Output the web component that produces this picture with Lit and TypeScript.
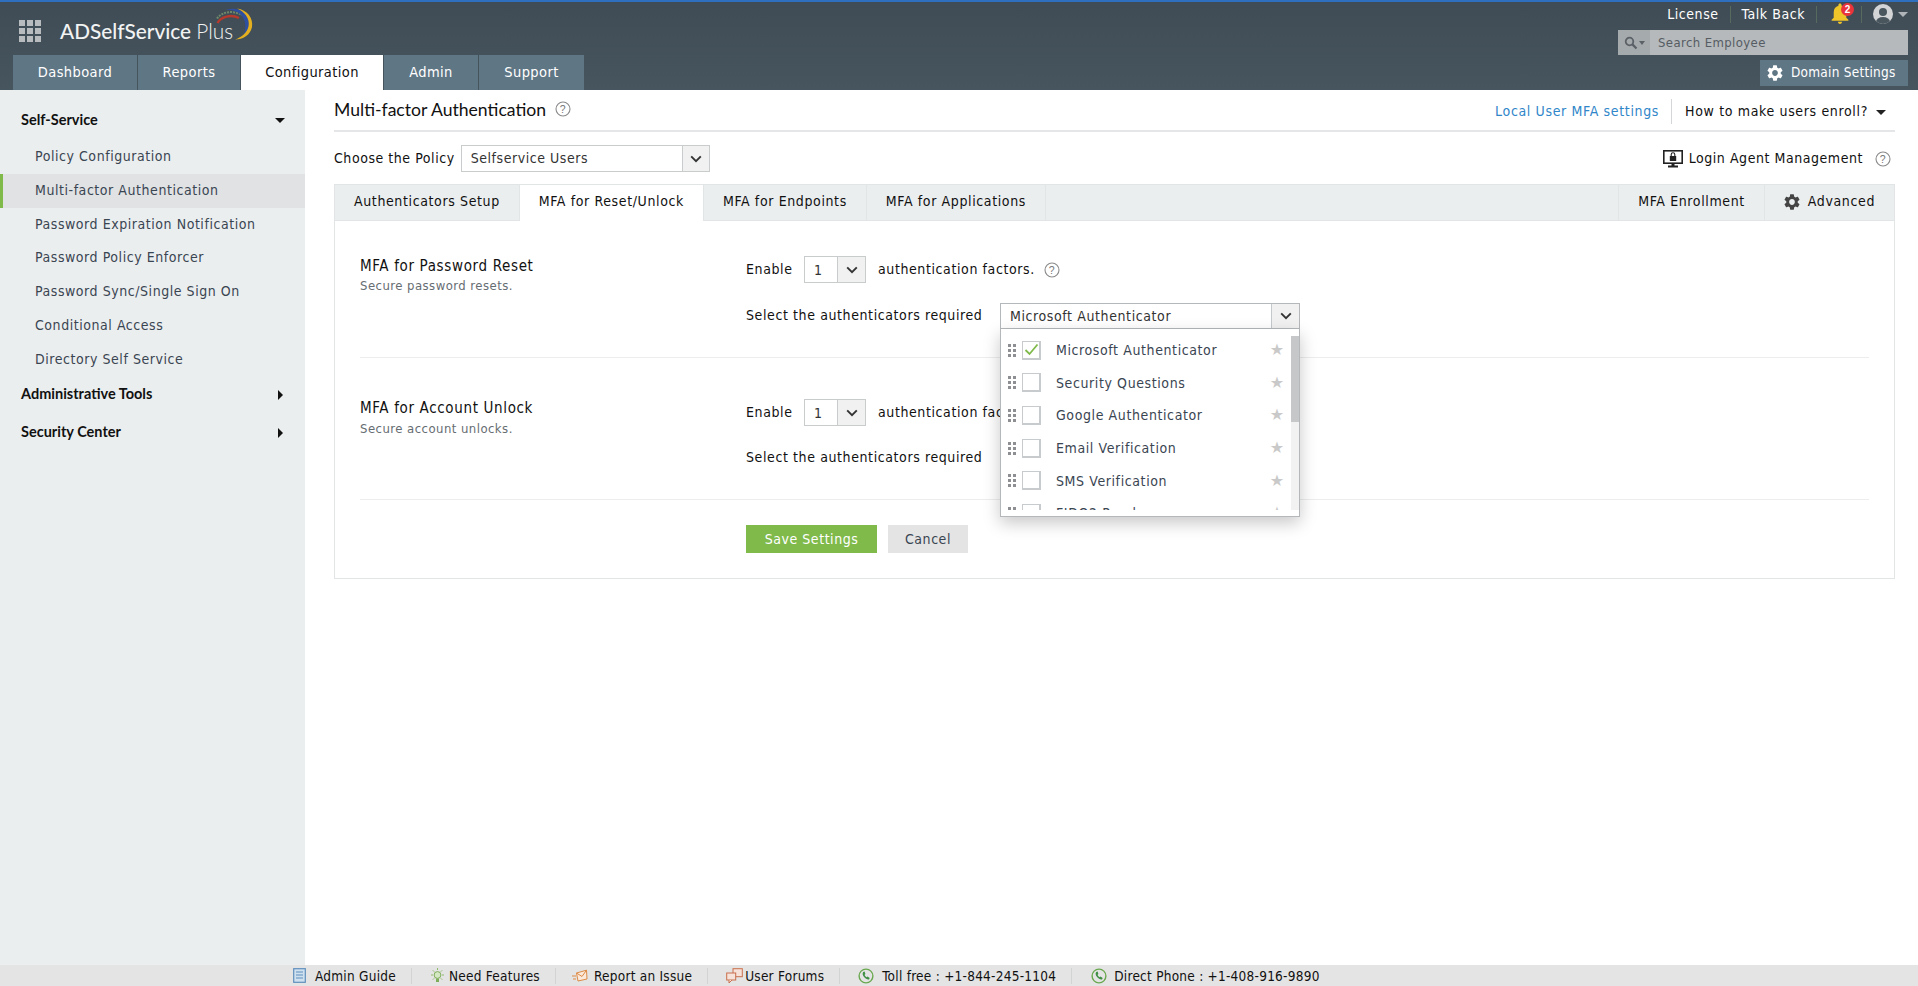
import { LitElement, html, css } from "lit";
import { customElement } from "lit/decorators.js";

const GEAR = "M19.14 12.94c.04-.3.06-.61.06-.94 0-.32-.02-.64-.07-.94l2.03-1.58a.49.49 0 0 0 .12-.61l-1.92-3.32a.488.488 0 0 0-.59-.22l-2.39.96c-.5-.38-1.03-.7-1.62-.94l-.36-2.54a.484.484 0 0 0-.48-.41h-3.84c-.24 0-.43.17-.47.41l-.36 2.54c-.59.24-1.13.57-1.62.94l-2.39-.96c-.22-.08-.47 0-.59.22L2.74 8.87c-.12.21-.08.47.12.61l2.03 1.58c-.05.3-.09.63-.09.94s.02.64.07.94l-2.03 1.58a.49.49 0 0 0-.12.61l1.92 3.32c.12.22.37.29.59.22l2.39-.96c.5.38 1.03.7 1.62.94l.36 2.54c.05.24.24.41.48.41h3.84c.24 0 .44-.17.47-.41l.36-2.54c.59-.24 1.13-.56 1.62-.94l2.39.96c.22.08.47 0 .59-.22l1.92-3.32c.12-.22.07-.47-.12-.61l-2.01-1.58zM12 15.6c-1.98 0-3.6-1.62-3.6-3.6s1.62-3.6 3.6-3.6 3.6 1.62 3.6 3.6-1.62 3.6-3.6 3.6z";

const gear = (size: number, color: string) => html`<svg class="ico" width=${size} height=${size} viewBox="2 2 20 20"><path fill=${color} fill-rule="evenodd" d=${GEAR}></path></svg>`;
const help = () => html`<svg class="ico" width="16" height="16" viewBox="0 0 16 16"><circle cx="8" cy="8" r="7" fill="none" stroke="#8a8a8a" stroke-width="1.1"></circle><text x="8" y="11.6" text-anchor="middle" font-size="10.5" font-family="'Liberation Sans',sans-serif" fill="#777">?</text></svg>`;
const chev = () => html`<svg width="12" height="8" viewBox="0 0 12 8"><path d="M1.2 1.4 6 6.2l4.8-4.8" fill="none" stroke="#333" stroke-width="1.9"></path></svg>`;
const phone = () => html`<svg class="ico" width="16" height="16" viewBox="0 0 16 16"><circle cx="8" cy="8" r="6.9" fill="none" stroke="#6aa84f" stroke-width="1.4"></circle><path d="M5.2 3.9c-1 1.3-.6 3.4.9 5.2 1.5 1.8 3.5 2.8 4.9 2.3l.7-1.3-2.2-1.6-.9.7c-.8-.3-1.8-1.5-2-2.4l.8-.8L6.6 3.6z" fill="#3f8f45"></path></svg>`;

@customElement("app-root")
export class AppRoot extends LitElement {
  static styles = css`
    :host { display: block; height: 986px; overflow: hidden; background: #fff; font-family: "DejaVu Sans", sans-serif; font-stretch: condensed; font-size: 14px; letter-spacing: .55px; color: #111; }
    * { box-sizing: border-box; }
    .ico { display: block; flex: none; }
    .page { height: 986px; display: flex; flex-direction: column; }

    /* header */
    .top { height: 90px; flex: none; background: linear-gradient(#3f4c55, #47555e); border-top: 2px solid #2f6fc0; display: flex; justify-content: space-between; }
    .top-left { display: flex; flex-direction: column; padding-left: 13px; }
    .brand { height: 53px; display: flex; align-items: flex-start; }
    .apps { width: 22px; height: 22px; margin: 18px 19px 0 6px; display: grid; grid-template-columns: repeat(3, 6px); gap: 2px; }
    .apps i { background: #b9bcbe; display: block; }
    .logo { margin-top: 9px; position: relative; font-family: "Lato", sans-serif; font-stretch: normal; letter-spacing: 0; font-size: 20.8px; line-height: 40px; color: #f2f3f3; font-weight: 500; height: 40px; white-space: nowrap; }
    .logo b { font-weight: 300; }
    .swoosh { position: absolute; left: 130px; top: -11px; }
    .nav { display: flex; height: 35px; gap: 1px; }
    .nav div { background: #5f7685; color: #fff; font-size: 14.5px; letter-spacing: .4px; line-height: 35px; text-align: center; }
    .nav .on { background: #fff; color: #111; }
    .top-right { width: 300px; padding-right: 10px; display: flex; flex-direction: column; align-items: flex-end; }
    .links { height: 24px; display: flex; align-items: center; color: #fff; }
    .links .sep { width: 1px; height: 17px; background: #566a5e; margin: 0 11px; }
    .bell { position: relative; width: 22px; height: 22px; padding-left: 2px; }
    .badge { position: absolute; left: 13px; top: 0; width: 13px; height: 13px; border-radius: 50%; background: #e8343a; color: #fff; font-size: 10px; font-weight: bold; letter-spacing: 0; line-height: 13px; text-align: center; font-family: "Liberation Sans", sans-serif; font-stretch: normal; }
    .caret-g { width: 0; height: 0; border: 5px solid transparent; border-top: 5px solid #aeb4b8; border-bottom: 0; margin-left: 5px; }
    .search { margin-top: 4px; width: 290px; height: 25px; background: #b5b9bc; display: flex; align-items: center; color: #555c63; font-size: 13px; letter-spacing: .4px; }
    .search .pre { width: 32px; height: 25px; background: #a5aaad; display: flex; align-items: center; justify-content: center; gap: 1px; margin-right: 8px; }
    .domain { margin-top: 5px; width: 148px; height: 26px; background: #5f7685; color: #fff; display: flex; align-items: center; gap: 8px; padding-left: 7px; font-size: 13.5px; letter-spacing: .25px; }
    .domain span { margin-top: -2px; }

    /* body */
    .mid { flex: 1; display: flex; min-height: 0; }
    .side { width: 305px; flex: none; background: #ebeeef; padding-top: 12px; }
    .head { display: flex; justify-content: space-between; align-items: center; height: 34px; padding: 0 20px 0 21px; font-family: "Lato", sans-serif; font-stretch: normal; letter-spacing: 0; font-weight: 700; font-size: 14.5px; color: #111; }
    .head.tall { height: 38px; }
    .head.adm { margin-top: -2px; }
    .head.first { margin-bottom: 4px; }
    .item { height: 33.75px; line-height: 33.75px; padding-left: 35px; color: #3a4552; }
    .item.on { background: #e0e2e4; border-left: 3px solid #7fba4b; padding-left: 32px; }
    .tri-d { width: 0; height: 0; border: 5px solid transparent; border-top: 5px solid #111; border-bottom: 0; margin-top: 3px; }
    .tri-r { width: 0; height: 0; border: 5px solid transparent; border-left: 5px solid #111; border-right: 0; margin-top: 3px; margin-right: 2px; }

    .main { flex: 1; padding: 0 23px 0 29px; min-width: 0; }
    .title { height: 42px; padding-bottom: 2px; border-bottom: 2px solid #e4e6e7; display: flex; align-items: center; }
    .title h1 { margin: 0; font-family: "Lato", sans-serif; font-stretch: normal; letter-spacing: 0; font-weight: 400; font-size: 17.6px; color: #111; }
    .title .ico { margin-left: 9px; }
    .title .r { margin-left: auto; margin-top: 4px; display: flex; align-items: center; letter-spacing: .65px; }
    .blue { color: #2f86c9; }
    .title .vsep { width: 1px; height: 25px; background: #d4d6d7; margin: 0 13px 0 12px; }
    .caret-k { width: 0; height: 0; border: 5px solid transparent; border-top: 5px solid #222; border-bottom: 0; margin: 2px 9px 0 8px; }
    .policy { margin-top: 13px; height: 27px; display: flex; align-items: center; }
    .policy > span { padding-bottom: 2px; }
    .sel { display: flex; border: 1px solid #c9cccd; background: #fff; color: #333; }
    .sel .v { flex: 1; padding-left: 9px; }
    .sel .a { border-left: 1px solid #c9cccd; background: #f1f1f1; display: flex; align-items: center; justify-content: center; }
    .sel-policy { margin-left: 6px; width: 249px; height: 27px; line-height: 25px; }
    .sel-policy .a { width: 27px; }
    .agent { margin-left: auto; display: flex; align-items: center; }
    .agent span { margin: 0 12px 0 6px; padding-bottom: 2px; }
    .agent .ico:last-child { margin-right: 4px; }
    .panel { margin-top: 12px; border: 1px solid #e2e5e6; height: 395px; }
    .tabs { display: flex; height: 36px; background: #ebeeef; letter-spacing: .62px; border-bottom: 1px solid #e2e5e6; }
    .tabs > div { padding: 0 19px; line-height: 33px; border-right: 1px solid #e2e5e6; }
    .tabs .on { background: #fff; height: 36px; }
    .tabs .sp { flex: 1; padding: 0; }
    .tabs .adv { border-right: none; height: 33px; display: flex; align-items: center; gap: 8px; padding-right: 19px; }
    .body { padding: 0 25px; }
    .sec { display: flex; border-bottom: 1px solid #eceeee; }
    .sec.a { height: 137px; padding-top: 35px; }
    .sec.b { height: 142px; padding-top: 40px; }
    .sec-l { width: 386px; flex: none; }
    .sec-l h3 { margin: 0 0 3px; font-weight: 400; font-size: 15px; letter-spacing: .65px; line-height: 20px; color: #111; }
    .sec.a h3 { margin-bottom: 2px; }
    .sec-l p { margin: 0; color: #666d72; font-size: 13px; letter-spacing: .45px; line-height: 16px; }
    .sec-r { flex: 1; letter-spacing: .6px; }
    .row1 { display: flex; align-items: center; height: 27px; }
    .sec.b .row1 { margin-top: 1px; }
    .row1 > span { padding-bottom: 2px; }
    .row1 > span:first-child { width: 58px; }
    .sel-n { width: 62px; height: 27px; line-height: 27px; }
    .sel-n .a { width: 28px; }
    .row1 .after { margin-left: 12px; }
    .row1 .ico { margin-left: 9px; margin-top: 1px; }
    .row2 { display: flex; height: 28px; margin-top: 18px; align-items: flex-start; line-height: 28px; }
    .sec.b .row2 { margin-top: 17px; }
    .row2 > span { width: 254px; flex: none; }
    .combo { position: relative; z-index: 2; width: 300px; margin-top: 2px; }
    .combo .sel { height: 26px; border-color: #b4b8ba; line-height: 24px; }
    .combo .a { width: 28px; border-color: #c6c9cb; }
    .combo .v { color: #333; }
    .pop { position: absolute; top: 26px; left: 0; width: 300px; height: 188px; background: #fff; border: 1px solid #b4b8ba; border-top: none; box-shadow: 0 6px 16px rgba(0,0,0,.22); padding: 0 0 7px; }
    .scroll { height: 181px; overflow: hidden; padding-top: 5px; }
    .opt { height: 32.6px; display: flex; align-items: center; color: #3a4552; position: relative; }
    .dots { margin-left: 7px; width: 8px; display: grid; grid-template-columns: 3px 3px; gap: 2px; }
    .dots i { width: 3px; height: 3px; background: #8d8f92; display: block; }
    .cb { width: 19px; height: 19px; margin-left: 6px; border: 1px solid #c7cbcd; border-bottom-width: 2px; border-right-width: 2px; display: flex; align-items: center; justify-content: center; }
    .lbl { margin-left: 15px; flex: 1; }
    .star { margin-right: 15px; color: #c9c9c9; font-size: 16px; letter-spacing: 0; line-height: 1; font-stretch: normal; }
    .track { position: absolute; right: 0; top: 7px; width: 8px; height: 174px; background: #f2f2f2; }
    .thumb { width: 8px; height: 86px; background: #c5c7c8; }
    .btns { display: flex; margin: 25px 0 0 386px; gap: 11px; }
    .btn { height: 28px; line-height: 28px; text-align: center; }
    .save { width: 131px; background: #7fba4b; color: #fff; }
    .cancel { width: 80px; background: #e4e4e4; color: #3a4552; }

    /* footer */
    .foot { height: 21px; flex: none; background: #e4e4e4; display: flex; align-items: center; padding-left: 293px; font-size: 13.5px; letter-spacing: .25px; color: #111; white-space: nowrap; }
    .foot .f { display: flex; align-items: center; height: 21px; }
    .foot .f span { margin-top: 1px; }
    .foot .s { width: 1px; height: 16px; background: #d2d4d4; margin: 0 15px; }
    .f1 { gap: 9px; }
    .f2 { gap: 4px; margin-left: 3px; }
    .f3 { gap: 6px; margin-left: 1px; }
    .f4 { gap: 2px; margin-left: 3px; }
    .f5 { gap: 8px; margin-left: 3px; }
    .f6 { gap: 7px; margin-left: 4px; }
  `;

  render() {
    const items = ["Policy Configuration", "Multi-factor Authentication", "Password Expiration Notification", "Password Policy Enforcer", "Password Sync/Single Sign On", "Conditional Access", "Directory Self Service"];
    const opts = ["Microsoft Authenticator", "Security Questions", "Google Authenticator", "Email Verification", "SMS Verification", "FIDO2 Passkeys"];
    return html`<div class="page">
      <div class="top">
        <div class="top-left">
          <div class="brand">
            <div class="apps">${Array.from({ length: 9 }, () => html`<i></i>`)}</div>
            <div class="logo">ADSelfService <b>Plus</b>
              <svg class="swoosh" width="80" height="50" viewBox="0 0 80 50">
                <path d="M27.5 23C31 16.5 41 14 49 18" fill="none" stroke="#b5392c" stroke-width="2.4"></path>
                <path d="M27 18.5C32 11.5 43 10 52 15" fill="none" stroke="#6f8a6a" stroke-width="2" stroke-dasharray="2 1"></path>
                <path d="M36 10C44 7 54 9 57.5 17 60 23 59 30 54 35 56 28 56 22 52 16 48 11 42 9.5 36 10z" fill="#2f4fa0"></path>
                <path d="M47 8.6C57 10 63.5 18 62 27 60.5 35 53 39.5 45 39.5 51 37.5 57 33.5 58.6 26 60 18 54 11.5 47 8.6z" fill="#e5b01f"></path>
              </svg>
            </div>
          </div>
          <div class="nav">
            <div style="width:124px">Dashboard</div>
            <div style="width:102px">Reports</div>
            <div class="on" style="width:142px">Configuration</div>
            <div style="width:94px">Admin</div>
            <div style="width:105px">Support</div>
          </div>
        </div>
        <div class="top-right">
          <div class="links">
            <span>License</span><i class="sep"></i><span>Talk Back</span><i class="sep"></i>
            <div class="bell">
              <svg width="20" height="22" viewBox="3 2 18 21"><path fill="#f0c52a" d="M12 22c1.1 0 2-.9 2-2h-4c0 1.1.9 2 2 2zm6-6v-5c0-3.07-1.63-5.64-4.5-6.32V4c0-.83-.67-1.5-1.5-1.5s-1.5.67-1.5 1.5v.68C7.64 5.36 6 7.92 6 11v5l-2 2v1h16v-1l-2-2z"></path></svg>
              <span class="badge">2</span>
            </div>
            <i class="sep"></i>
            <svg width="20" height="20" viewBox="0 0 20 20"><defs><clipPath id="c"><circle cx="10" cy="10" r="10"></circle></clipPath></defs><circle cx="10" cy="10" r="10" fill="#d2d4d6"></circle><g clip-path="url(#c)" fill="#4a565e"><circle cx="10" cy="8" r="4"></circle><ellipse cx="10" cy="18" rx="7" ry="5"></ellipse></g></svg>
            <i class="caret-g"></i>
          </div>
          <div class="search">
            <div class="pre">
              <svg width="14" height="14" viewBox="0 0 14 14"><circle cx="5.5" cy="5.5" r="3.8" fill="none" stroke="#5a6167" stroke-width="1.8"></circle><path d="M8.4 8.4 12.5 12.5" stroke="#5a6167" stroke-width="2.2"></path></svg>
              <svg width="6" height="4" viewBox="0 0 6 4"><path d="M0 0h6L3 4z" fill="#5a6167"></path></svg>
            </div>
            Search Employee
          </div>
          <div class="domain">${gear(16, "#fff")}<span>Domain Settings</span></div>
        </div>
      </div>
      <div class="mid">
        <div class="side">
          <div class="head first"><span>Self-Service</span><i class="tri-d"></i></div>
          ${items.map((t, i) => html`<div class="item ${i === 1 ? "on" : ""}">${t}</div>`)}
          <div class="head tall adm"><span>Administrative Tools</span><i class="tri-r"></i></div>
          <div class="head tall"><span>Security Center</span><i class="tri-r"></i></div>
        </div>
        <div class="main">
          <div class="title">
            <h1>Multi-factor Authentication</h1>${help()}
            <div class="r"><span class="blue">Local User MFA settings</span><i class="vsep"></i><span>How to make users enroll?</span><i class="caret-k"></i></div>
          </div>
          <div class="policy">
            <span>Choose the Policy</span>
            <div class="sel sel-policy"><div class="v">Selfservice Users</div><div class="a">${chev()}</div></div>
            <div class="agent">
              <svg class="ico" width="20" height="18" viewBox="0 0 20 18"><rect x=".8" y=".8" width="18.4" height="12.4" fill="#fff" stroke="#222" stroke-width="1.6"></rect><rect x="6.8" y="6" width="6.4" height="5" fill="#222"></rect><path d="M8.2 6V4.6a1.8 1.8 0 0 1 3.6 0V6" fill="none" stroke="#222" stroke-width="1.1"></path><rect x="8.5" y="13" width="3" height="3" fill="#222"></rect><rect x="5" y="15.5" width="10" height="2" fill="#222"></rect></svg>
              <span>Login Agent Management</span>${help()}
            </div>
          </div>
          <div class="panel">
            <div class="tabs">
              <div>Authenticators Setup</div><div class="on">MFA for Reset/Unlock</div><div>MFA for Endpoints</div><div>MFA for Applications</div>
              <div class="sp"></div>
              <div>MFA Enrollment</div>
              <div class="adv">${gear(16, "#444")}<span>Advanced</span></div>
            </div>
            <div class="body">
              <div class="sec a">
                <div class="sec-l"><h3>MFA for Password Reset</h3><p>Secure password resets.</p></div>
                <div class="sec-r">
                  <div class="row1"><span>Enable</span><div class="sel sel-n"><div class="v">1</div><div class="a">${chev()}</div></div><span class="after">authentication factors.</span>${help()}</div>
                  <div class="row2"><span>Select the authenticators required</span>
                    <div class="combo">
                      <div class="sel"><div class="v">Microsoft Authenticator</div><div class="a">${chev()}</div></div>
                      <div class="pop">
                        <div class="scroll">
                          ${opts.map((o, i) => html`<div class="opt">
                            <div class="dots">${Array.from({ length: 6 }, () => html`<i></i>`)}</div>
                            <div class="cb">${i === 0 ? html`<svg width="15" height="13" viewBox="0 0 15 13"><path d="M1.5 7 5.5 11 13.5 1.5" fill="none" stroke="#7fba4b" stroke-width="1.8"></path></svg>` : ""}</div>
                            <span class="lbl">${o}</span><span class="star">★</span>
                          </div>`)}
                        </div>
                        <div class="track"><div class="thumb"></div></div>
                      </div>
                    </div>
                  </div>
                </div>
              </div>
              <div class="sec b">
                <div class="sec-l"><h3>MFA for Account Unlock</h3><p>Secure account unlocks.</p></div>
                <div class="sec-r">
                  <div class="row1"><span>Enable</span><div class="sel sel-n"><div class="v">1</div><div class="a">${chev()}</div></div><span class="after">authentication factors.</span></div>
                  <div class="row2"><span>Select the authenticators required</span></div>
                </div>
              </div>
              <div class="btns"><div class="btn save">Save Settings</div><div class="btn cancel">Cancel</div></div>
            </div>
          </div>
        </div>
      </div>
      <div class="foot">
        <div class="f f1">
          <svg class="ico" width="13" height="15" viewBox="0 0 13 15"><rect x=".7" y=".7" width="11.6" height="13.6" fill="#cfe0ef" stroke="#5f8fbd" stroke-width="1.2"></rect><path d="M3 4h7M3 7h7M3 10h7" stroke="#5f8fbd"></path></svg>
          <span>Admin Guide</span></div>
        <i class="s"></i>
        <div class="f f2">
          <svg class="ico" width="15" height="16" viewBox="0 0 15 16"><circle cx="7.5" cy="7" r="3.4" fill="#d5e8c4" stroke="#7fae5a"></circle><rect x="6" y="10.5" width="3" height="3.5" fill="#7fae5a"></rect><path d="M7.5 0v2M1 7h2M12 7h2M2.8 2.3l1.4 1.4M12.2 2.3l-1.4 1.4M2.8 11.7l1.4-1.4M12.2 11.7l-1.4-1.4" stroke="#8fbb6c"></path></svg>
          <span>Need Features</span></div>
        <i class="s"></i>
        <div class="f f3">
          <svg class="ico" width="16" height="14" viewBox="0 0 16 14"><path d="M4.5 4 14.5 1.2 15 10 6 12z" fill="#fbeadb" stroke="#dd8a45"></path><path d="M4.5 4 10 7.5 14.5 1.2" fill="none" stroke="#dd8a45"></path><path d="M0 7h4M1 10h3" stroke="#dd8a45"></path></svg>
          <span>Report an Issue</span></div>
        <i class="s"></i>
        <div class="f f4">
          <svg class="ico" width="17" height="15" viewBox="0 0 17 15"><rect x="7" y=".7" width="9.3" height="8" fill="#f6e2d8" stroke="#c96f4d"></rect><rect x=".7" y="5" width="9" height="7" fill="#f6e2d8" stroke="#c96f4d"></rect><path d="M3 12v3l3-3" fill="#f6e2d8" stroke="#c96f4d"></path></svg>
          <span>User Forums</span></div>
        <i class="s"></i>
        <div class="f f5">${phone()}<span>Toll free : +1-844-245-1104</span></div>
        <i class="s"></i>
        <div class="f f6">${phone()}<span>Direct Phone : +1-408-916-9890</span></div>
      </div>
    </div>`;
  }
}
